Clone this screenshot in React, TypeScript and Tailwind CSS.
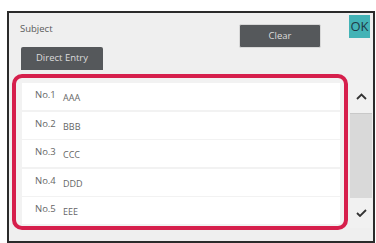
import React from 'react';

const rows = [
  { no: 'No.1', name: 'AAA' },
  { no: 'No.2', name: 'BBB' },
  { no: 'No.3', name: 'CCC' },
  { no: 'No.4', name: 'DDD' },
  { no: 'No.5', name: 'EEE' },
];

export default function App() {
  return (
    <div
      className="w-[376px] h-[243px] bg-white pl-[7px] pt-[11px] pr-[1px] overflow-hidden"
      style={{ fontFamily: '"Open Sans", "Noto Sans", sans-serif' }}
    >
      <div className="h-[232px] border-2 border-[#2b2b2b] bg-[#efefef] flex flex-col">
        {/* header */}
        <div className="h-[34px] flex items-start shrink-0">
          <span className="ml-[11px] mt-[9px] text-[9.5px] leading-[14px] text-[#5a5a5a]">Subject</span>
          <button className="ml-auto mt-[11px] w-[82px] h-[24px] rounded-[2px] bg-[#55585b] border border-[#d8d8d8] text-[9.5px] text-[#dcdcdc] flex items-center justify-center shrink-0">
            Clear
          </button>
          <button className="ml-[28px] mt-[2px] mr-[3px] w-[21px] h-[23px] bg-[#43b3b6] text-[13px] leading-none text-[#1f3a47] flex items-center justify-center shrink-0">
            OK
          </button>
        </div>

        <div className="h-[23px] flex shrink-0">
          <button className="ml-[12px] w-[82px] h-[23px] rounded-t-[2px] bg-[#55585b] text-[9.5px] text-[#dcdcdc] flex items-center justify-center">
            Direct Entry
          </button>
        </div>

        <div className="mt-[4px] flex items-start">
          <div className="ml-[3px] w-[336px] h-[156px] border-[4px] border-[#d61f4c] rounded-[10px] bg-[#f2f2f2] pl-[6px] pr-[4px] pt-[5px] flex flex-col gap-[1.5px]">
            {rows.map((r) => (
              <div key={r.no} className="h-[27px] bg-white flex items-center text-[#666] shrink-0">
                <span className="ml-[13px] w-[28px] text-[9.5px] -mt-[2px]">{r.no}</span>
                <span className="text-[9px] mt-[3px]">{r.name}</span>
              </div>
            ))}
          </div>

          <div className="ml-[2px] mt-[6px] w-[22px] h-[148px] flex flex-col">
            <div className="h-[34px] border-b border-[#c9c9c9] bg-[#f1f1f1] flex items-center justify-center">
              <svg width="11" height="7" viewBox="0 0 11 7">
                <path d="M1 6 L5.5 1.5 L10 6" fill="none" stroke="#333" strokeWidth="1.8" />
              </svg>
            </div>
            <div className="flex-1 bg-[#d9d9d9]" />
            <div className="h-[30px] bg-[#f1f1f1] flex items-center justify-center">
              <svg width="11" height="8" viewBox="0 0 11 8">
                <path d="M1 4 L4 7 L10 1" fill="none" stroke="#333" strokeWidth="1.8" />
              </svg>
            </div>
          </div>
        </div>
      </div>
    </div>
  );
}
